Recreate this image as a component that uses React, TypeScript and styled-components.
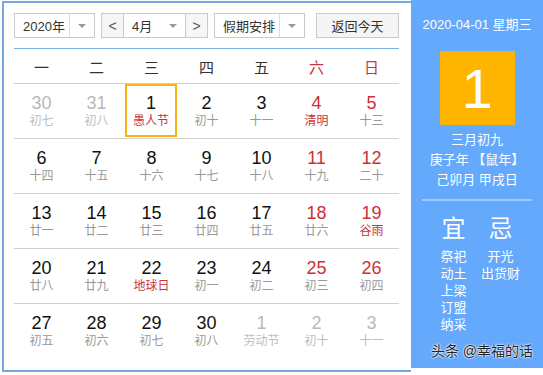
import styled, { createGlobalStyle } from 'styled-components';

const GlobalStyle = createGlobalStyle`
  html, body {
    margin: 0;
    padding: 0;
    background: #fff;
  }
  body {
    font-family: 'Liberation Sans', 'Noto Sans CJK SC', sans-serif;
  }
`;

type Day = {
  n: number;
  lunar: string;
  other?: boolean;
  fest?: boolean;
  selected?: boolean;
};

const weeks: Day[][] = [
  [
    { n: 30, lunar: '初七', other: true },
    { n: 31, lunar: '初八', other: true },
    { n: 1, lunar: '愚人节', fest: true, selected: true },
    { n: 2, lunar: '初十' },
    { n: 3, lunar: '十一' },
    { n: 4, lunar: '清明', fest: true },
    { n: 5, lunar: '十三' },
  ],
  [
    { n: 6, lunar: '十四' },
    { n: 7, lunar: '十五' },
    { n: 8, lunar: '十六' },
    { n: 9, lunar: '十七' },
    { n: 10, lunar: '十八' },
    { n: 11, lunar: '十九' },
    { n: 12, lunar: '二十' },
  ],
  [
    { n: 13, lunar: '廿一' },
    { n: 14, lunar: '廿二' },
    { n: 15, lunar: '廿三' },
    { n: 16, lunar: '廿四' },
    { n: 17, lunar: '廿五' },
    { n: 18, lunar: '廿六' },
    { n: 19, lunar: '谷雨', fest: true },
  ],
  [
    { n: 20, lunar: '廿八' },
    { n: 21, lunar: '廿九' },
    { n: 22, lunar: '地球日', fest: true },
    { n: 23, lunar: '初一' },
    { n: 24, lunar: '初二' },
    { n: 25, lunar: '初三' },
    { n: 26, lunar: '初四' },
  ],
  [
    { n: 27, lunar: '初五' },
    { n: 28, lunar: '初六' },
    { n: 29, lunar: '初七' },
    { n: 30, lunar: '初八' },
    { n: 1, lunar: '劳动节', other: true },
    { n: 2, lunar: '初十', other: true },
    { n: 3, lunar: '十一', other: true },
  ],
];

const weekdays = ['一', '二', '三', '四', '五', '六', '日'];

const Wrapper = styled.div`
  display: flex;
  width: 543px;
  height: 372px;
`;

const Main = styled.div`
  box-sizing: border-box;
  width: 409px;
  height: 371px;
  margin-left: 2px;
  margin-top: 1px;
  padding: 10px 12px 0 10px;
  border: 2px solid #72a8de;
  border-right: none;
  background: #fff;
`;

const Toolbar = styled.div`
  display: flex;
  align-items: center;
  height: 25px;
  padding-bottom: 10px;
  border-bottom: 1px solid #7db3e4;
`;

const Select = styled.div<{ $w: number; $ml?: number }>`
  box-sizing: border-box;
  display: flex;
  width: ${(p) => p.$w}px;
  height: 25px;
  margin-left: ${(p) => p.$ml ?? 0}px;
  border: 1px solid #c9c9c9;
  background: #fff;
  font-size: 13px;
  color: #333;
`;

const SelectText = styled.div`
  flex: 1;
  display: flex;
  align-items: center;
  padding-left: 8px;
`;

const SelectArrow = styled.div<{ $line?: boolean }>`
  width: 24px;
  display: flex;
  align-items: center;
  justify-content: center;
  border-left: ${(p) => (p.$line ? '1px solid #dcdcdc' : 'none')};
  &::after {
    content: '';
    border-left: 4px solid transparent;
    border-right: 4px solid transparent;
    border-top: 4px solid #999;
  }
`;

const NavBtn = styled.div`
  box-sizing: border-box;
  width: 23px;
  height: 25px;
  display: flex;
  align-items: center;
  justify-content: center;
  border: 1px solid #c9c9c9;
  background: #f6f6f6;
  color: #555;
  font-size: 14px;
`;

const MonthSelect = styled.div`
  box-sizing: border-box;
  display: flex;
  width: 61px;
  height: 25px;
  border-top: 1px solid #c9c9c9;
  border-bottom: 1px solid #c9c9c9;
  font-size: 13px;
  color: #333;
`;

const Group = styled.div`
  display: flex;
  margin-left: 6px;
`;

const TodayBtn = styled.div`
  box-sizing: border-box;
  width: 83px;
  height: 25px;
  margin-left: 11px;
  display: flex;
  align-items: center;
  justify-content: center;
  border: 1px solid #c9c9c9;
  background: #f5f5f5;
  font-size: 13px;
  color: #333;
`;

const HeadRow = styled.div`
  display: grid;
  grid-template-columns: repeat(7, 55px);
  height: 34px;
  border-bottom: 1px solid #cfcfcf;
`;

const HeadCell = styled.div<{ $red?: boolean }>`
  display: flex;
  align-items: center;
  justify-content: center;
  font-size: 15px;
  color: ${(p) => (p.$red ? '#c93439' : '#333')};
`;

const WeekRow = styled.div<{ $last?: boolean }>`
  box-sizing: border-box;
  display: grid;
  grid-template-columns: repeat(7, 55px);
  height: 55px;
  border-bottom: ${(p) => (p.$last ? 'none' : '1px solid #cfcfcf')};
`;

const Cell = styled.div<{ $selected?: boolean }>`
  box-sizing: border-box;
  display: flex;
  flex-direction: column;
  align-items: center;
  padding-top: ${(p) => (p.$selected ? 7 : 9)}px;
  margin: ${(p) => (p.$selected ? '0 2px 0 1px' : '0')};
  border: ${(p) => (p.$selected ? '2px solid #f7b314' : 'none')};
  ${(p) => (p.$selected ? 'height: 53px;' : '')}
`;

const Num = styled.div<{ $tone: 'other' | 'red' | 'normal' }>`
  font-size: 18px;
  line-height: 20px;
  color: ${(p) =>
    p.$tone === 'other' ? '#b8b8b8' : p.$tone === 'red' ? '#cd3136' : '#111'};
`;

const Lunar = styled.div<{ $tone: 'other' | 'fest' | 'normal' }>`
  font-size: 12px;
  line-height: 17px;
  color: ${(p) =>
    p.$tone === 'other' ? '#bdbdbd' : p.$tone === 'fest' ? '#c9343a' : '#999'};
`;

const Side = styled.div`
  flex: 1;
  display: flex;
  flex-direction: column;
  align-items: center;
  background: #64a9fc;
  color: #fff;
  height: 368px;
  font-size: 13px;
`;

const DateLine = styled.div`
  margin-top: 17px;
  line-height: 16px;
  font-size: 13px;
`;

const BigDay = styled.div`
  width: 75px;
  height: 74px;
  margin-top: 18px;
  background: #ffb400;
  border-radius: 2px;
  display: flex;
  align-items: center;
  justify-content: center;
  font-size: 56px;
  color: #fff;
`;

const Info = styled.div`
  margin-top: 5px;
  text-align: center;
  line-height: 20px;
`;

const Divider = styled.div`
  width: 110px;
  height: 2px;
  margin-top: 9px;
  background: #9ecbff;
`;

const Luck = styled.div`
  display: flex;
  gap: 21px;
  margin-top: 13px;
`;

const LuckCol = styled.div`
  width: 26px;
  display: flex;
  flex-direction: column;
  align-items: center;
  white-space: nowrap;
`;

const LuckTitle = styled.div`
  font-size: 24px;
  line-height: 30px;
  margin-bottom: 4px;
`;

const LuckItem = styled.div`
  font-size: 13px;
  line-height: 17px;
`;

const Watermark = styled.div`
  margin-top: auto;
  margin-bottom: 8px;
  margin-left: 10px;
  font-size: 14px;
  color: #222;
  text-shadow: 0 0 2px #fff, 0 0 2px #fff, 0 0 1px #fff;
`;

export default function App() {
  return (
    <>
      <GlobalStyle />
      <Wrapper>
        <Main>
          <Toolbar>
            <Select $w={81}>
              <SelectText>2020年</SelectText>
              <SelectArrow $line />
            </Select>
            <Group>
              <NavBtn>&lt;</NavBtn>
              <MonthSelect>
                <SelectText>4月</SelectText>
                <SelectArrow />
              </MonthSelect>
              <NavBtn>&gt;</NavBtn>
            </Group>
            <Select $w={91} $ml={6}>
              <SelectText>假期安排</SelectText>
              <SelectArrow $line />
            </Select>
            <TodayBtn>返回今天</TodayBtn>
          </Toolbar>
          <HeadRow>
            {weekdays.map((w, i) => (
              <HeadCell key={w} $red={i >= 5}>
                {w}
              </HeadCell>
            ))}
          </HeadRow>
          {weeks.map((week, wi) => (
            <WeekRow key={wi} $last={wi === weeks.length - 1}>
              {week.map((d, di) => (
                <Cell key={di} $selected={d.selected}>
                  <Num
                    $tone={d.other ? 'other' : di >= 5 ? 'red' : 'normal'}
                  >
                    {d.n}
                  </Num>
                  <Lunar
                    $tone={d.other ? 'other' : d.fest ? 'fest' : 'normal'}
                  >
                    {d.lunar}
                  </Lunar>
                </Cell>
              ))}
            </WeekRow>
          ))}
        </Main>
        <Side>
          <DateLine>2020-04-01 星期三</DateLine>
          <BigDay>1</BigDay>
          <Info>
            <div>三月初九</div>
            <div>庚子年 【鼠年】</div>
            <div>己卯月 甲戌日</div>
          </Info>
          <Divider />
          <Luck>
            <LuckCol>
              <LuckTitle>宜</LuckTitle>
              {['祭祀', '动土', '上梁', '订盟', '纳采'].map((t) => (
                <LuckItem key={t}>{t}</LuckItem>
              ))}
            </LuckCol>
            <LuckCol>
              <LuckTitle>忌</LuckTitle>
              {['开光', '出货财'].map((t) => (
                <LuckItem key={t}>{t}</LuckItem>
              ))}
            </LuckCol>
          </Luck>
          <Watermark>头条 @幸福的话</Watermark>
        </Side>
      </Wrapper>
    </>
  );
}
